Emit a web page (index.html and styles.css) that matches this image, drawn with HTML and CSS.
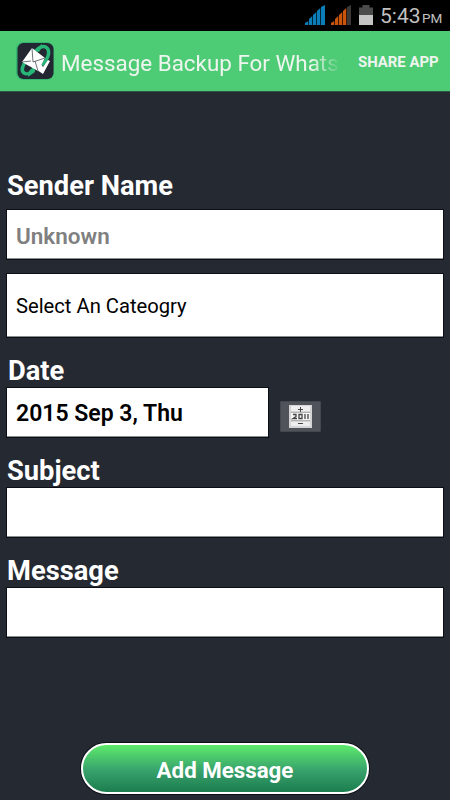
FILE: index.html
```
<!DOCTYPE html>
<html lang="en">
<head>
    <meta charset="UTF-8">
    <meta name="viewport" content="width=device-width, initial-scale=1.0">
    <title>Message Backup</title>
    <link rel="stylesheet" href="styles.css">
</head>
<body>
    <div class="status-bar">
        <svg class="signal" width="20" height="20" viewBox="0 0 20 20">
            <path fill="#0b7db8" d="M0 20v-2l3.300-2v4zM4 20v-6l3.300-3v9zM8 20V10l3.300-3v13zM12 20V6l3.300-3v17zM16 20V2l4-2v20z"/>
        </svg>
        <svg class="signal" width="20" height="20" viewBox="0 0 20 20">
            <path fill="#c9540c" d="M0 20v-2l3.300-2v4zM4 20v-6l3.300-3v9zM8 20V10l3.300-3v13zM12 20V6l3.300-3v17z"/>
            <path fill="#393939" d="M16 20V2l4-2v20z"/>
        </svg>
        <svg class="battery" width="14" height="20" viewBox="0 0 14 20">
            <path fill="#4b4b4b" d="M3.500 0h7v2.500H14V10H0V2.500h3.500z"/>
            <path fill="#c4c4c4" d="M0 10h14v10H0z"/>
        </svg>
        <span class="time">5:43</span>
        <span class="period">PM</span>
    </div>

    <div class="action-bar">
        <svg class="logo" width="40" height="40" viewBox="0 0 40 40">
            <rect x="1" y="1" width="38" height="38" rx="7.500" fill="#2aad72" opacity="0.700"/>
            <rect x="2.500" y="2" width="36" height="36" rx="6" fill="#222731"/>
            <path d="M21 10c3-4 8-6 11-3 4 4 0 13-5 17" fill="none" stroke="#28b578" stroke-width="3.500"/>
            <path d="M19 9l8-6v3l-3 5z" fill="#28b578"/>
            <path d="M11 20c-4 5-5 10-2 12 3 2 7 0 10-4" fill="none" stroke="#28b578" stroke-width="3.500"/>
            <path d="M13 36l7-5-1-6-5 5z" fill="#28b578"/>
            <path d="M26 23l2 3 5-7 2 1-7 13-6-4z" fill="#fff"/>
            <path d="M17 7l13 10-7 13L7 21z" fill="#fff"/>
            <path d="M17 7l1 14 12-4M7 21l9-1M20 20l3 10" fill="none" stroke="#4a4f58" stroke-width="0.800"/>
        </svg>
        <div class="title">Message Backup For Whats</div>
        <div class="share">SHARE APP</div>
    </div>

    <div class="form">
        <div class="label">Sender Name</div>
        <div class="field hint">Unknown</div>
        <div class="field category">Select An Cateogry</div>

        <div class="label date-label">Date</div>
        <div class="date-row">
            <div class="field date">2015 Sep 3, Thu</div>
            <!-- date picker button -->
            <div class="picker">
                <svg width="23" height="23" viewBox="0 0 23 23">
                    <path fill="#d4d4d4" d="M0 0h23v23H0z"/>
                    <path fill="#eee" d="M2 1h19v5H2zM2 17h19v4H2z"/>
                    <path fill="#b2b2b2" d="M2 7h19v1H2zM2 15h19v1H2z"/>
                    <path fill="#f5f5f5" d="M2 8h19v7H2z"/>
                    <path stroke="#444" fill="none" d="M9 4.500h5M11.500 2v5M9 18.500h5"/>
                    <path stroke="#444" stroke-width="1.300" fill="none" d="M4 9.500h3v2l-3 2h4M10 9.500h3v4h-3zM16 9v5M19 9v5"/>
                </svg>
            </div>
        </div>

        <div class="label subject-label">Subject</div>
        <div class="field"></div>

        <div class="label message-label">Message</div>
        <div class="field"></div>

        <div class="button">Add Message</div>
    </div>
</body>
</html>
```
FILE: styles.css
```
* {
    box-sizing: border-box;
}

body {
    margin: 0;
    height: 800px;
    overflow: hidden;
    background: #252932;
    font-family: Roboto, sans-serif;
    display: flex;
    flex-direction: column;
}

/* status bar */
.status-bar {
    height: 31px;
    flex: none;
    background: #000;
    color: #c0c0c0;
    display: flex;
    justify-content: flex-end;
    padding: 5px 8px 0 0;
    line-height: 23px;
}

.signal {
    margin-right: 6px;
}

.battery {
    margin: 0 7px 0 2px;
}

.time {
    font-size: 21px;
    width: 37px;
    white-space: nowrap;
}

.period {
    font-size: 13.5px;
    width: 20px;
    margin-left: 5px;
    line-height: 27px;
}

/* action bar */
.action-bar {
    height: 61px;
    flex: none;
    background: #4ecb75;
    border-bottom: 1px solid #2a5545;
    display: flex;
    align-items: center;
    padding-left: 15px;
    color: #eef5ef;
}

.logo {
    flex: none;
}

.title {
    width: 283px;
    flex: none;
    margin-left: 6px;
    padding-top: 3px;
    white-space: nowrap;
    font-size: 22.4px;
    line-height: 32px;
    -webkit-mask-image: linear-gradient(to right, #000 250px, transparent 280px);
    mask-image: linear-gradient(to right, #000 250px, transparent 280px);
}

.share {
    margin-left: 14px;
    padding-top: 1px;
    font-size: 14.9px;
    font-weight: 700;
    white-space: nowrap;
}

/* form */
.form {
    padding: 78px 7px 0;
    display: flex;
    flex-direction: column;
}

.label {
    height: 32px;
    margin-bottom: 8px;
    color: #fff;
    font-size: 27.3px;
    font-weight: 700;
    line-height: 32px;
}

.field {
    height: 49px;
    background: #fff;
    border-bottom: 1px solid #8b8e91;
    box-shadow: 0 0 0 1px #0b0e15;
    padding-left: 9px;
    font-size: 23px;
    font-weight: 600;
    line-height: 51px;
    color: #000;
}

.hint {
    color: #808080;
    font-size: 22.5px;
    line-height: 52px;
}

.category {
    height: 63px;
    margin-top: 15px;
    font-size: 20.2px;
    font-weight: 400;
    line-height: 64px;
}

.date-label {
    margin: 18px 0 1px 1px;
}

.date-row {
    display: flex;
}

.date {
    width: 261px;
}

.picker {
    width: 41px;
    height: 31px;
    margin: 13px 0 0 12px;
    background: #50545a;
    border: 1px solid #43474e;
    border-radius: 1px;
    display: flex;
    align-items: center;
    justify-content: center;
}

.subject-label,
.message-label {
    margin: 18px 0 1px;
}

.button {
    width: 288px;
    height: 51px;
    margin: 106px 0 0 74px;
    border: 2px solid #fff;
    border-radius: 28px;
    background: linear-gradient(#5eea6c, #37a16c 55%, #1c7d4d);
    box-shadow: 0 0 0 1px #0b0e15;
    color: #fff;
    font-size: 22.3px;
    font-weight: 700;
    line-height: 50px;
    text-align: center;
}
```
